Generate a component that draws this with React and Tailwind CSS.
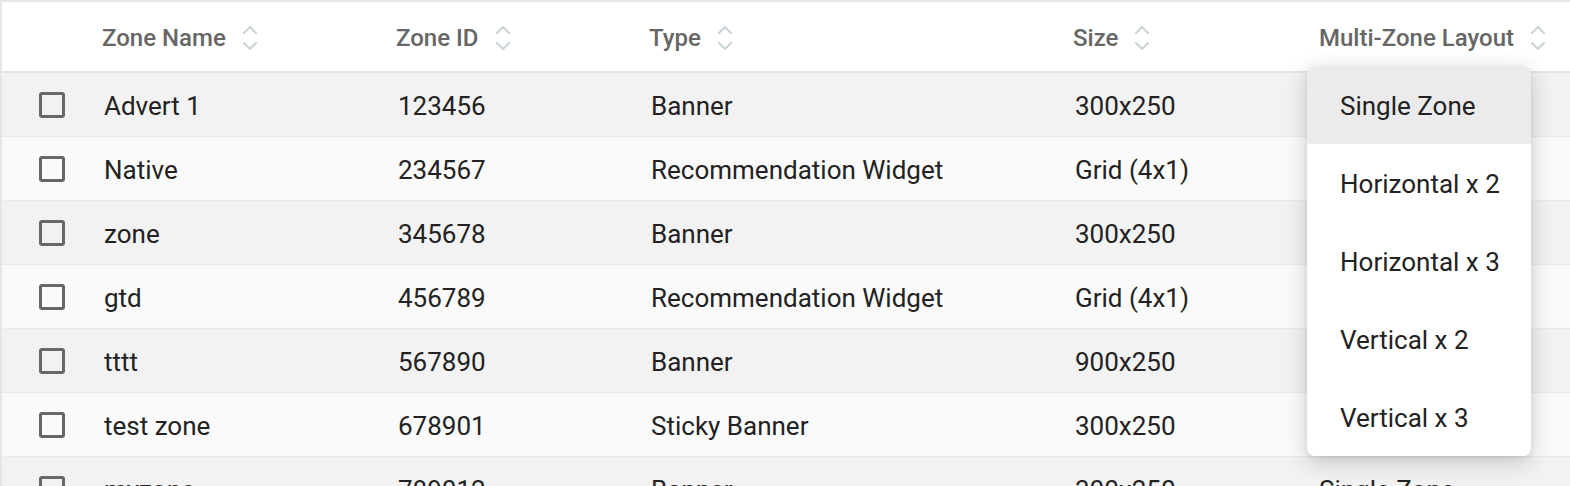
import React from "react";

const ROWS = [
  { name: "Advert 1", id: "123456", type: "Banner", size: "300x250", layout: "Single Zone" },
  { name: "Native", id: "234567", type: "Recommendation Widget", size: "Grid (4x1)", layout: "Single Zone" },
  { name: "zone", id: "345678", type: "Banner", size: "300x250", layout: "Single Zone" },
  { name: "gtd", id: "456789", type: "Recommendation Widget", size: "Grid (4x1)", layout: "Single Zone" },
  { name: "tttt", id: "567890", type: "Banner", size: "900x250", layout: "Single Zone" },
  { name: "test zone", id: "678901", type: "Sticky Banner", size: "300x250", layout: "Single Zone" },
  { name: "myzone", id: "789012", type: "Banner", size: "300x250", layout: "Single Zone" },
];

const OPTIONS = ["Single Zone", "Horizontal x 2", "Horizontal x 3", "Vertical x 2", "Vertical x 3"];

const COLS = "grid grid-cols-[102px_294px_253px_424px_244px_1fr]";

const SortIcon = () => (
  <svg width="16" height="32" viewBox="0 0 16 32" fill="none" stroke="#c9d3d6" strokeWidth="2" strokeLinecap="round" strokeLinejoin="round" className="ml-[16px]">
    <path d="M2 11 L8 5 L14 11" />
    <path d="M2 21 L8 27 L14 21" />
  </svg>
);

const HeaderCell = ({ label, shift = true }) => (
  <div className={`flex items-center ${shift ? "-ml-[2px]" : ""}`}>
    <span>{label}</span>
    <SortIcon />
  </div>
);

export default function App() {
  return (
    <div className="relative w-[1570px] h-[486px] overflow-hidden bg-white border-t-2 border-l-2 border-[#e6e6e6]" style={{ fontFamily: "Roboto, 'Liberation Sans', sans-serif" }}>
      {/* header */}
      <div className={`${COLS} h-[71px] pt-[3px] items-center text-[24px] font-medium text-[#666666] border-b-2 border-[#e3e3e3]`}>
        <div />
        <HeaderCell label="Zone Name" />
        <HeaderCell label="Zone ID" />
        <HeaderCell label="Type" />
        <HeaderCell label="Size" />
        <HeaderCell label="Multi-Zone Layout" shift={false} />
      </div>

      {/* rows */}
      {ROWS.map((r, i) => (
        <div
          key={r.id}
          className={`${COLS} h-[64px] items-center text-[26px] text-[#222222] border-b border-[#ebebeb] ${i % 2 === 0 ? "bg-[#f2f2f2]" : "bg-[#fafafa]"}`}
        >
          <div className="pl-[37px] flex items-center">
            <div className="w-[26px] h-[26px] rounded-[3px] border-[3px] border-[#676767]" />
          </div>
          <div className="pt-[4px]">{r.name}</div>
          <div className="pt-[4px]">{r.id}</div>
          <div className="pt-[4px]">{r.type}</div>
          <div className="pt-[4px]">{r.size}</div>
          <div className="pt-[4px]">{r.layout}</div>
        </div>
      ))}

      {/* layout dropdown */}
      <div className="absolute left-[1305px] top-[64px] w-[224px] rounded-lg bg-white shadow-[0_6px_24px_rgba(0,0,0,0.18),0_2px_6px_rgba(0,0,0,0.08)] overflow-hidden">
        {OPTIONS.map((o, i) => (
          <div
            key={o}
            className={`h-[78px] flex items-center pl-[33px] pt-[2px] text-[26px] text-[#222222] ${i === 0 ? "bg-[#ebebeb]" : ""}`}
          >
            {o}
          </div>
        ))}
      </div>
    </div>
  );
}
